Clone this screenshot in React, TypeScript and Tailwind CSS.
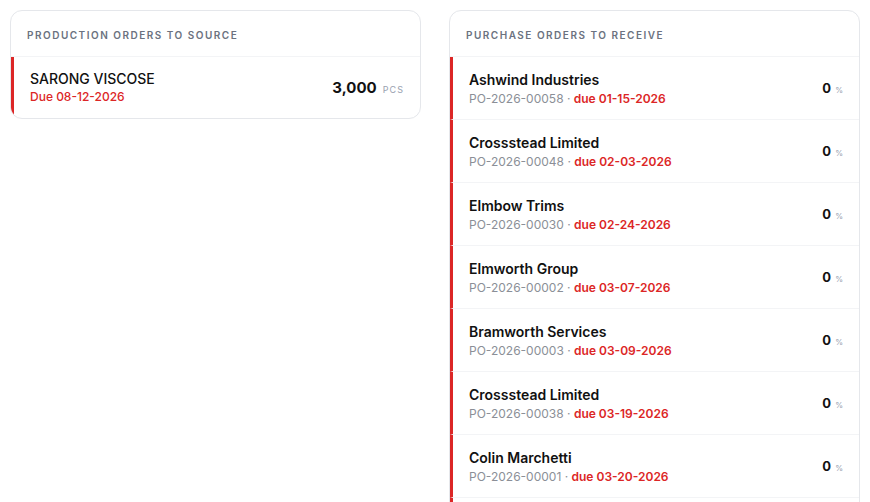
import React from 'react';

interface PurchaseOrder {
  vendor: string;
  number: string;
  due: string;
  received: number;
}

const purchaseOrders: PurchaseOrder[] = [
  { vendor: 'Ashwind Industries', number: 'PO-2026-00058', due: '01-15-2026', received: 0 },
  { vendor: 'Crossstead Limited', number: 'PO-2026-00048', due: '02-03-2026', received: 0 },
  { vendor: 'Elmbow Trims', number: 'PO-2026-00030', due: '02-24-2026', received: 0 },
  { vendor: 'Elmworth Group', number: 'PO-2026-00002', due: '03-07-2026', received: 0 },
  { vendor: 'Bramworth Services', number: 'PO-2026-00003', due: '03-09-2026', received: 0 },
  { vendor: 'Crossstead Limited', number: 'PO-2026-00038', due: '03-19-2026', received: 0 },
  { vendor: 'Colin Marchetti', number: 'PO-2026-00001', due: '03-20-2026', received: 0 },
];

const CardHeader: React.FC<{ title: string }> = ({ title }) => (
  <div className="h-[46px] px-4 flex items-center border-b border-gray-100">
    <h2 className="text-[10px] font-semibold uppercase tracking-[0.15em] text-[#6b7280] pt-[4px]">{title}</h2>
  </div>
);

export default function App() {
  return (
    <div
      className="h-[502px] overflow-hidden bg-white px-[10px] pt-[10px] grid grid-cols-[411px_411px] gap-[28px] items-start"
      style={{ fontFamily: 'Inter, "Noto Sans", sans-serif' }}
    >
      <section className="bg-white border border-gray-200 rounded-xl overflow-hidden">
        <CardHeader title="Production orders to source" />
        <div className="h-[61px] border-l-[3px] border-[#dc2626] pl-4 pr-4 pt-[1px] flex items-center justify-between">
          <div className="flex flex-col">
            <span className="text-[14px] font-medium text-[#111] leading-[18px]">SARONG VISCOSE</span>
            <span className="text-[12px] font-medium text-[#dc2626] leading-[18px]">Due 08-12-2026</span>
          </div>
          <div className="flex items-baseline gap-[6px]">
            <span className="text-[15px] font-bold text-[#111]">3,000</span>
            <span className="text-[9px] tracking-[0.12em] text-gray-400">PCS</span>
          </div>
        </div>
      </section>

      <section className="bg-white border border-gray-200 rounded-xl overflow-hidden">
        <CardHeader title="Purchase orders to receive" />
        <ul>
          {purchaseOrders.map((po) => (
            <li
              key={po.number}
              className="h-[63px] border-l-[3px] border-[#dc2626] border-b border-b-gray-100 pl-4 pr-4 pt-[2px] flex items-center justify-between"
            >
              <div className="flex flex-col">
                <span className="text-[14px] font-semibold text-[#111] leading-[19px]">{po.vendor}</span>
                <span className="text-[12px] leading-[19px] text-[#8b8f97]">
                  {po.number} · <span className="font-semibold text-[#dc2626]">due {po.due}</span>
                </span>
              </div>
              <div className="flex items-baseline gap-[4px]">
                <span className="text-[13px] font-bold text-[#111]">{po.received}</span>
                <span className="text-[8px] text-gray-400">%</span>
              </div>
            </li>
          ))}
          <li className="h-[63px] border-l-[3px] border-[#dc2626]" />
        </ul>
      </section>
    </div>
  );
}
